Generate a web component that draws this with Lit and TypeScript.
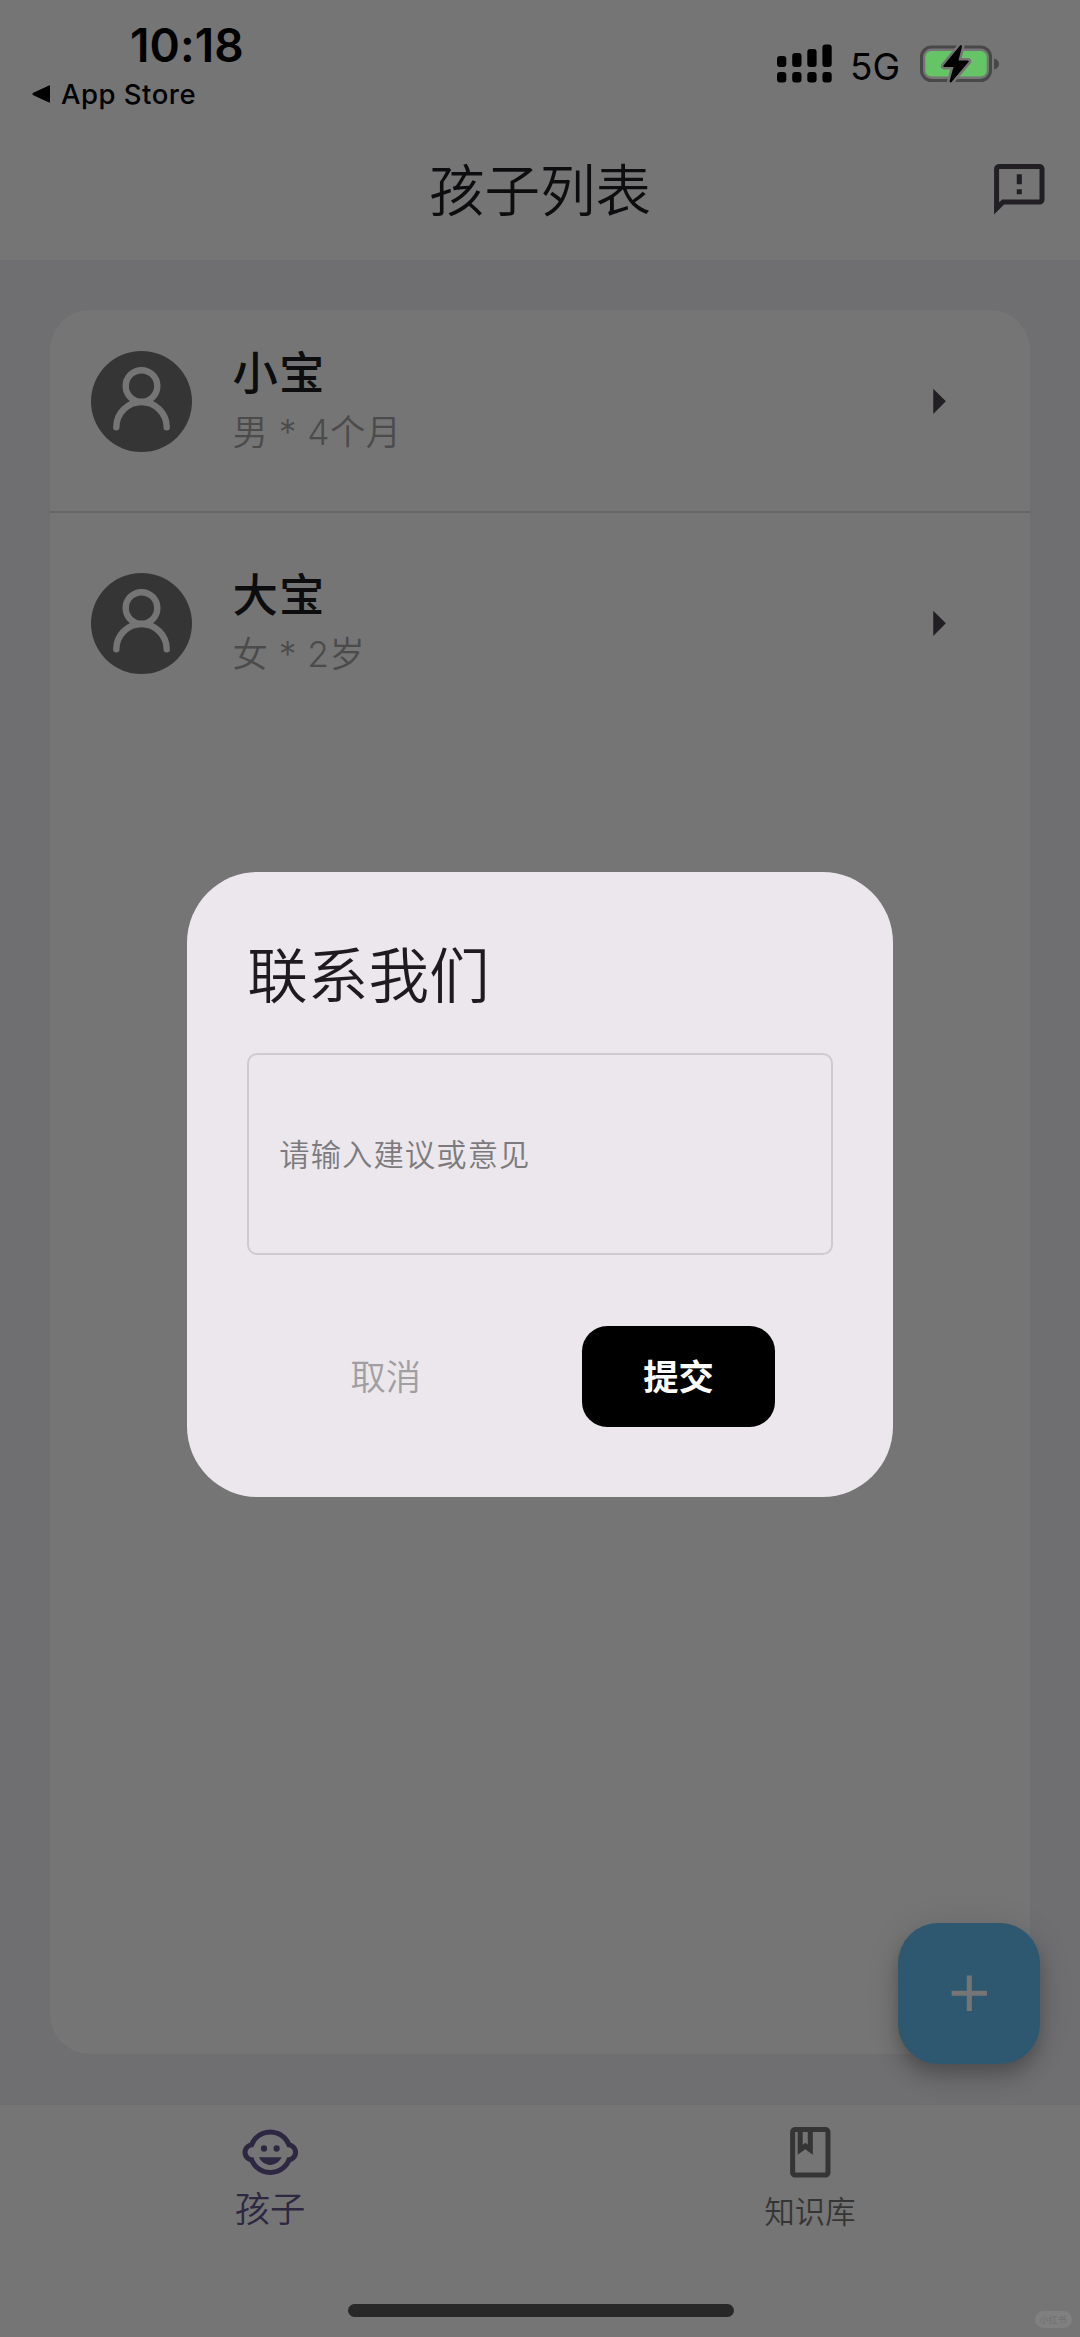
import { LitElement, html, css, svg } from "lit";
import { customElement } from "lit/decorators.js";

interface Child {
  name: string;
  info: string;
}

const CHILDREN: Child[] = [
  { name: "小宝", info: "男 * 4个月" },
  { name: "大宝", info: "女 * 2岁" },
];

const icon = (d: string) => html`<svg class="icon" viewBox="0 0 24 24">${svg`<path fill="currentColor" d=${d} />`}</svg>`;

const FEEDBACK =
  "M20 2H4c-1.1 0-1.99.9-1.99 2L2 22l4-4h14c1.1 0 2-.9 2-2V4c0-1.1-.9-2-2-2zm0 14H5.17l-.59.59-.58.58V4h16v12zm-9-4h2v2h-2zm0-6h2v4h-2z";
const ARROW = "M10 17l5-5-5-5v10z";
const PLUS = "M19 13h-6v6h-2v-6H5v-2h6V5h2v6h6v2z";
const BOOK =
  "M18 2H6c-1.1 0-2 .9-2 2v16c0 1.1.9 2 2 2h12c1.1 0 2-.9 2-2V4c0-1.1-.9-2-2-2zM9 4h2v5l-1-.75L9 9V4zm9 16H6V4h1v9l3-2.25L13 13V4h5v16z";
const FACE =
  "M22.94 11.34c-.25-1.51-1.36-2.74-2.81-3.17-.53-1.12-1.28-2.1-2.19-2.91C16.36 3.85 14.28 3 12 3s-4.36.85-5.94 2.26c-.92.81-1.67 1.8-2.19 2.91-1.45.43-2.56 1.65-2.81 3.17-.04.21-.06.43-.06.66 0 .23.02.45.06.66.25 1.51 1.36 2.74 2.81 3.17.52 1.11 1.27 2.09 2.17 2.89C7.62 20.14 9.71 21 12 21s4.38-.86 5.97-2.28c.9-.8 1.65-1.79 2.17-2.89 1.44-.43 2.55-1.65 2.8-3.17.04-.21.06-.43.06-.66 0-.23-.02-.45-.06-.66zM19 14c-.1 0-.19-.02-.29-.03-.2.67-.49 1.29-.86 1.86C16.6 17.74 14.45 19 12 19s-4.6-1.26-5.85-3.17c-.37-.57-.66-1.19-.86-1.86-.1.01-.19.03-.29.03-1.1 0-2-.9-2-2s.9-2 2-2c.1 0 .19.02.29.03.2-.67.49-1.29.86-1.86C7.4 6.26 9.55 5 12 5s4.6 1.26 5.85 3.17c.37.57.66 1.19.86 1.86.1-.01.19-.03.29-.03 1.1 0 2 .9 2 2s-.9 2-2 2zM8.25 10.5a1.25 1.25 0 1 0 2.5 0a1.25 1.25 0 1 0 -2.5 0M13.25 10.5a1.25 1.25 0 1 0 2.5 0a1.25 1.25 0 1 0 -2.5 0M7.5 14c.76 1.77 2.49 3 4.5 3s3.74-1.23 4.5-3h-9z";

@customElement("app-root")
export class AppRoot extends LitElement {
  static styles = css`
    :host {
      display: block;
      position: relative;
      width: 1080px;
      height: 2337px;
      overflow: hidden;
      font-family: Inter, "Noto Sans CJK SC", sans-serif;
      color: #1d1b20;
    }
    * {
      box-sizing: border-box;
    }
    svg {
      display: block;
      flex: none;
    }
    .icon {
      width: 60.6px;
      height: 60.6px;
    }
    .screen {
      display: flex;
      flex-direction: column;
      height: 100%;
      background: #f2f2f7;
    }
    .top {
      flex: none;
      height: 260px;
      background: #fff;
      display: flex;
      flex-direction: column;
    }
    .status {
      height: 118px;
      display: flex;
      justify-content: space-between;
      position: relative;
      z-index: 3;
      color: #000;
    }
    .status-left {
      padding: 17px 0 0 32px;
    }
    .time {
      padding-left: 98px;
      font-size: 46px;
      line-height: 57px;
      font-weight: 600;
      letter-spacing: 0.1px;
    }
    .back {
      display: flex;
      align-items: center;
      gap: 10px;
      font-size: 27.5px;
      line-height: 40px;
      font-weight: 500;
      letter-spacing: 0.5px;
    }
    .status-right {
      display: flex;
      align-items: flex-start;
      padding: 44px 80px 0 0;
    }
    .net {
      font-size: 37px;
      line-height: 46px;
      margin: 0 20px 0 18px;
    }
    .bar {
      flex: 1;
      display: grid;
      grid-template-columns: 121px 1fr 121px;
      align-items: center;
    }
    .bar-title {
      grid-column: 2;
      text-align: center;
      font-size: 55.5px;
      line-height: 70px;
      padding-top: 4px;
      font-weight: 350;
    }
    .bar-action {
      display: flex;
      justify-content: center;
      color: #49454f;
    }
    .body {
      flex: 1;
      padding: 50px 50.5px 51px 50px;
      display: flex;
    }
    .card {
      flex: 1;
      background: #fff;
      border-radius: 40px;
    }
    .row {
      height: 182px;
      padding: 0 60.5px 0 41px;
      display: flex;
      align-items: center;
    }
    .avatar {
      width: 101px;
      height: 101px;
    }
    .who {
      flex: 1;
      padding: 3px 0 0 40.5px;
    }
    .name {
      font-size: 45.4px;
      line-height: 60px;
      font-weight: 500;
      letter-spacing: 1px;
    }
    .info {
      font-size: 35.3px;
      line-height: 57px;
      letter-spacing: 0.5px;
      color: #a4a4a4;
      font-weight: 350;
    }
    .arrow {
      color: #49454f;
    }
    .divider {
      margin: 19px 0 19px;
      height: 2px;
      background: #dfdde0;
    }
    .fab {
      position: absolute;
      left: 898.4px;
      top: 1922.7px;
      width: 141.3px;
      height: 141.3px;
      border-radius: 40.4px;
      background: #62bff1;
      color: #fff;
      display: flex;
      align-items: center;
      justify-content: center;
      box-shadow: 0 8px 13px rgba(0, 0, 0, 0.12), 0 15px 25px rgba(0, 0, 0, 0.14), 0 3px 45px rgba(0, 0, 0, 0.1);
    }
    .nav {
      flex: none;
      height: 232px;
      background: #fff;
      display: grid;
      grid-template-columns: 1fr 1fr;
      align-items: start;
      position: relative;
    }
    .tab {
      display: flex;
      flex-direction: column;
      align-items: center;
      padding-top: 17.4px;
      color: #757575;
      font-size: 30.3px;
      line-height: 58px;
      font-weight: 350;
    }
    .tab.active {
      color: #65558f;
      font-size: 35.3px;
      line-height: 53px;
    }
    .overlay {
      position: absolute;
      inset: 0;
      z-index: 2;
      background: rgba(0, 0, 0, 0.54);
      display: flex;
      justify-content: center;
      align-items: flex-start;
      padding-top: 871.7px;
    }
    .dialog {
      width: 706.5px;
      height: 625.6px;
      border-radius: 70.6px;
      background: #ebe7ec;
      padding: 60.5px;
      display: flex;
      flex-direction: column;
    }
    .dialog-title {
      font-size: 60.6px;
      line-height: 80.7px;
      padding-top: 4px;
      font-weight: 350;
    }
    .field {
      margin-top: 36.5px;
      height: 202px;
      border: 2px solid #cfcacf;
      border-radius: 10px;
      padding: 0 30px 3px;
      display: flex;
      align-items: center;
      font-size: 30.3px;
      letter-spacing: 1.1px;
      color: #7c7a7d;
      font-weight: 350;
    }
    .actions {
      margin-top: 70.5px;
      display: flex;
      align-items: center;
      font-size: 35.3px;
    }
    .cancel {
      width: 277px;
      padding-bottom: 3px;
      text-align: center;
      color: #a19ea2;
      font-weight: 350;
    }
    .submit {
      margin-left: 58px;
      width: 192.5px;
      height: 101px;
      padding-bottom: 3px;
      border-radius: 25.2px;
      background: #000;
      color: #fff;
      font-weight: 700;
      display: flex;
      align-items: center;
      justify-content: center;
    }
    .home {
      position: absolute;
      z-index: 3;
      left: 347.5px;
      top: 2304px;
      width: 386px;
      height: 13px;
      border-radius: 6.5px;
      background: #282828;
    }
    .mark {
      position: absolute;
      z-index: 3;
      left: 1034.5px;
      top: 2311px;
      width: 37px;
      height: 17px;
      border-radius: 8.5px;
      background: #808080;
      color: #707070;
      font-size: 9px;
      line-height: 17px;
      text-align: center;
    }
  `;

  private signal() {
    const bars = [
      [0, 12, 11],
      [15.2, 9, 14],
      [30.3, 5, 18],
      [45.4, 0.5, 22.5],
    ];
    return html`<svg width="55" height="39" viewBox="0 0 55 39">
      ${bars.map(
        ([x, y, h]) => svg`<rect x=${x} y=${y} width="9.3" height=${h} rx="3" /><rect x=${x} y="28" width="9.3" height="10.5" rx="3" />`
      )}
    </svg>`;
  }

  private battery() {
    return html`<svg width="80" height="40" viewBox="0 0 80 40">
      <rect x="1.5" y="3" width="69" height="33.5" rx="10" fill="none" stroke="#484848" stroke-width="3" />
      <rect x="5.3" y="7" width="61.4" height="25.5" rx="6" fill="#64c466" />
      <path d="M74 14.5c3 .8 5 3 5 5.5s-2 4.7-5 5.5z" fill="#484848" />
      <path
        d="M40.5 1L23.5 21.5Q22.8 23 24.5 23H33.5L29.5 37.5Q30 39 31.5 38L48.5 18Q49.5 16.5 47.5 16.5H38.5L42 2.5Q41.8 .5 40.5 1Z"
        fill="#000"
        stroke="#757575"
        stroke-width="5"
        paint-order="stroke"
      />
    </svg>`;
  }

  private row(child: Child) {
    return html`<div class="row">
      <svg class="avatar" viewBox="0 0 101 101">
        <circle cx="50.5" cy="50.5" r="50.5" fill="#757575" />
        <g fill="none" stroke="#fff" stroke-width="6.4" stroke-linecap="round">
          <circle cx="50.5" cy="35" r="15.8" />
          <path d="M25.3 76.2a25.2 25.2 0 0 1 50.4 0" />
        </g>
      </svg>
      <div class="who">
        <div class="name">${child.name}</div>
        <div class="info">${child.info}</div>
      </div>
      <div class="arrow">${icon(ARROW)}</div>
    </div>`;
  }

  render() {
    return html`
      <div class="screen">
        <header class="top">
          <div class="status">
            <div class="status-left">
              <div class="time">10:18</div>
              <div class="back">
                <svg width="19" height="18" viewBox="0 0 19 18"><path d="M17.5 .8V17.2L1 9.6Q0 9 1 8.4Z" stroke="#000" stroke-linejoin="round" /></svg>
                <span>App Store</span>
              </div>
            </div>
            <div class="status-right">${this.signal()}<span class="net">5G</span>${this.battery()}</div>
          </div>
          <div class="bar">
            <div class="bar-title">孩子列表</div>
            <div class="bar-action">${icon(FEEDBACK)}</div>
          </div>
        </header>
        <main class="body">
          <div class="card">
            ${this.row(CHILDREN[0])}
            <div class="divider"></div>
            ${this.row(CHILDREN[1])}
          </div>
        </main>
        <nav class="nav">
          <div class="tab active">${icon(FACE)}<span>孩子</span></div>
          <div class="tab">${icon(BOOK)}<span>知识库</span></div>
        </nav>
      </div>
      <div class="fab">${icon(PLUS)}</div>
      <div class="overlay">
        <div class="dialog">
          <div class="dialog-title">联系我们</div>
          <div class="field">请输入建议或意见</div>
          <div class="actions">
            <div class="cancel">取消</div>
            <div class="submit">提交</div>
          </div>
        </div>
      </div>
      <div class="home"></div>
      <div class="mark">小红书</div>
    `;
  }
}
